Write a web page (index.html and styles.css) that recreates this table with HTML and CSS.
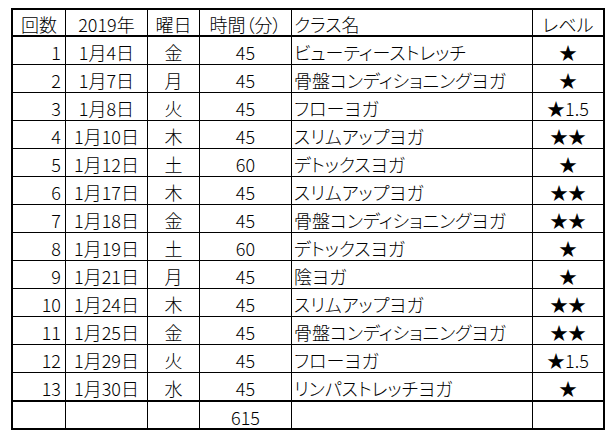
FILE: index.html
```html
<!DOCTYPE html>
<html lang="ja">
<head>
<meta charset="utf-8">
<title>ヨガ記録</title>
<link rel="stylesheet" href="styles.css">
</head>
<body>
<div class="sheet">
  <div class="c hd ctr">回数</div><div class="c hd ctr">2019年</div><div class="c hd ctr">曜日</div><div class="c hd ctr">時間（分）</div><div class="c hd lft">クラス名</div><div class="c hd ctr last">レベル</div>

  <div class="c rgt">1</div><div class="c ctr">1月4日</div><div class="c ctr">金</div><div class="c ctr">45</div><div class="c lft">ビューティーストレッチ</div><div class="c ctr last">★</div>
  <div class="c rgt">2</div><div class="c ctr">1月7日</div><div class="c ctr">月</div><div class="c ctr">45</div><div class="c lft">骨盤コンディショニングヨガ</div><div class="c ctr last">★</div>
  <div class="c rgt">3</div><div class="c ctr">1月8日</div><div class="c ctr">火</div><div class="c ctr">45</div><div class="c lft">フローヨガ</div><div class="c ctr last">★1.5</div>
  <div class="c rgt">4</div><div class="c ctr">1月10日</div><div class="c ctr">木</div><div class="c ctr">45</div><div class="c lft">スリムアップヨガ</div><div class="c ctr last">★★</div>
  <div class="c rgt">5</div><div class="c ctr">1月12日</div><div class="c ctr">土</div><div class="c ctr">60</div><div class="c lft">デトックスヨガ</div><div class="c ctr last">★</div>
  <div class="c rgt">6</div><div class="c ctr">1月17日</div><div class="c ctr">木</div><div class="c ctr">45</div><div class="c lft">スリムアップヨガ</div><div class="c ctr last">★★</div>
  <div class="c rgt">7</div><div class="c ctr">1月18日</div><div class="c ctr">金</div><div class="c ctr">45</div><div class="c lft">骨盤コンディショニングヨガ</div><div class="c ctr last">★★</div>
  <div class="c rgt">8</div><div class="c ctr">1月19日</div><div class="c ctr">土</div><div class="c ctr">60</div><div class="c lft">デトックスヨガ</div><div class="c ctr last">★</div>
  <div class="c rgt">9</div><div class="c ctr">1月21日</div><div class="c ctr">月</div><div class="c ctr">45</div><div class="c lft">陰ヨガ</div><div class="c ctr last">★</div>
  <div class="c rgt">10</div><div class="c ctr">1月24日</div><div class="c ctr">木</div><div class="c ctr">45</div><div class="c lft">スリムアップヨガ</div><div class="c ctr last">★★</div>
  <div class="c rgt">11</div><div class="c ctr">1月25日</div><div class="c ctr">金</div><div class="c ctr">45</div><div class="c lft">骨盤コンディショニングヨガ</div><div class="c ctr last">★★</div>
  <div class="c rgt">12</div><div class="c ctr">1月29日</div><div class="c ctr">火</div><div class="c ctr">45</div><div class="c lft">フローヨガ</div><div class="c ctr last">★1.5</div>
  <div class="c rgt end">13</div><div class="c ctr end">1月30日</div><div class="c ctr end">水</div><div class="c ctr end">45</div><div class="c lft end">リンパストレッチヨガ</div><div class="c ctr last end">★</div>

  <div class="c tot"></div><div class="c tot"></div><div class="c tot"></div><div class="c ctr tot">615</div><div class="c tot"></div><div class="c tot last"></div>
</div>
</body>
</html>
```

FILE: styles.css
```css
html, body {
  margin: 0;
  padding: 0;
  background: #ffffff;
}

body {
  font-family: "Noto Sans CJK JP", "Noto Sans", sans-serif;
  font-size: 18px;
  font-weight: 300;
  color: #000000;
  font-feature-settings: "palt";
}

.sheet {
  margin: 8px 0 0 11px;
  width: 594px;
  box-sizing: border-box;
  border: 2px solid #000000;
  display: grid;
  grid-template-columns: 53px 82px 52px 92px 241px 70px;
  grid-template-rows: 27px repeat(12, 28px) 29px 26px;
}

.c {
  box-sizing: border-box;
  border-right: 1px solid #000000;
  border-bottom: 1px solid #000000;
  display: flex;
  align-items: center;
  padding-top: 3px;
  line-height: 1;
  white-space: nowrap;
  overflow: hidden;
}

.hd {
  border-bottom-width: 2px;
  padding-top: 2px;
}

.end {
  border-bottom-width: 2px;
}

.tot {
  border-bottom: none;
}

.last {
  border-right: none;
}

.ctr {
  justify-content: center;
}

.lft {
  justify-content: flex-start;
  padding-left: 2px;
}

.rgt {
  justify-content: flex-end;
  padding-right: 4px;
}
```
